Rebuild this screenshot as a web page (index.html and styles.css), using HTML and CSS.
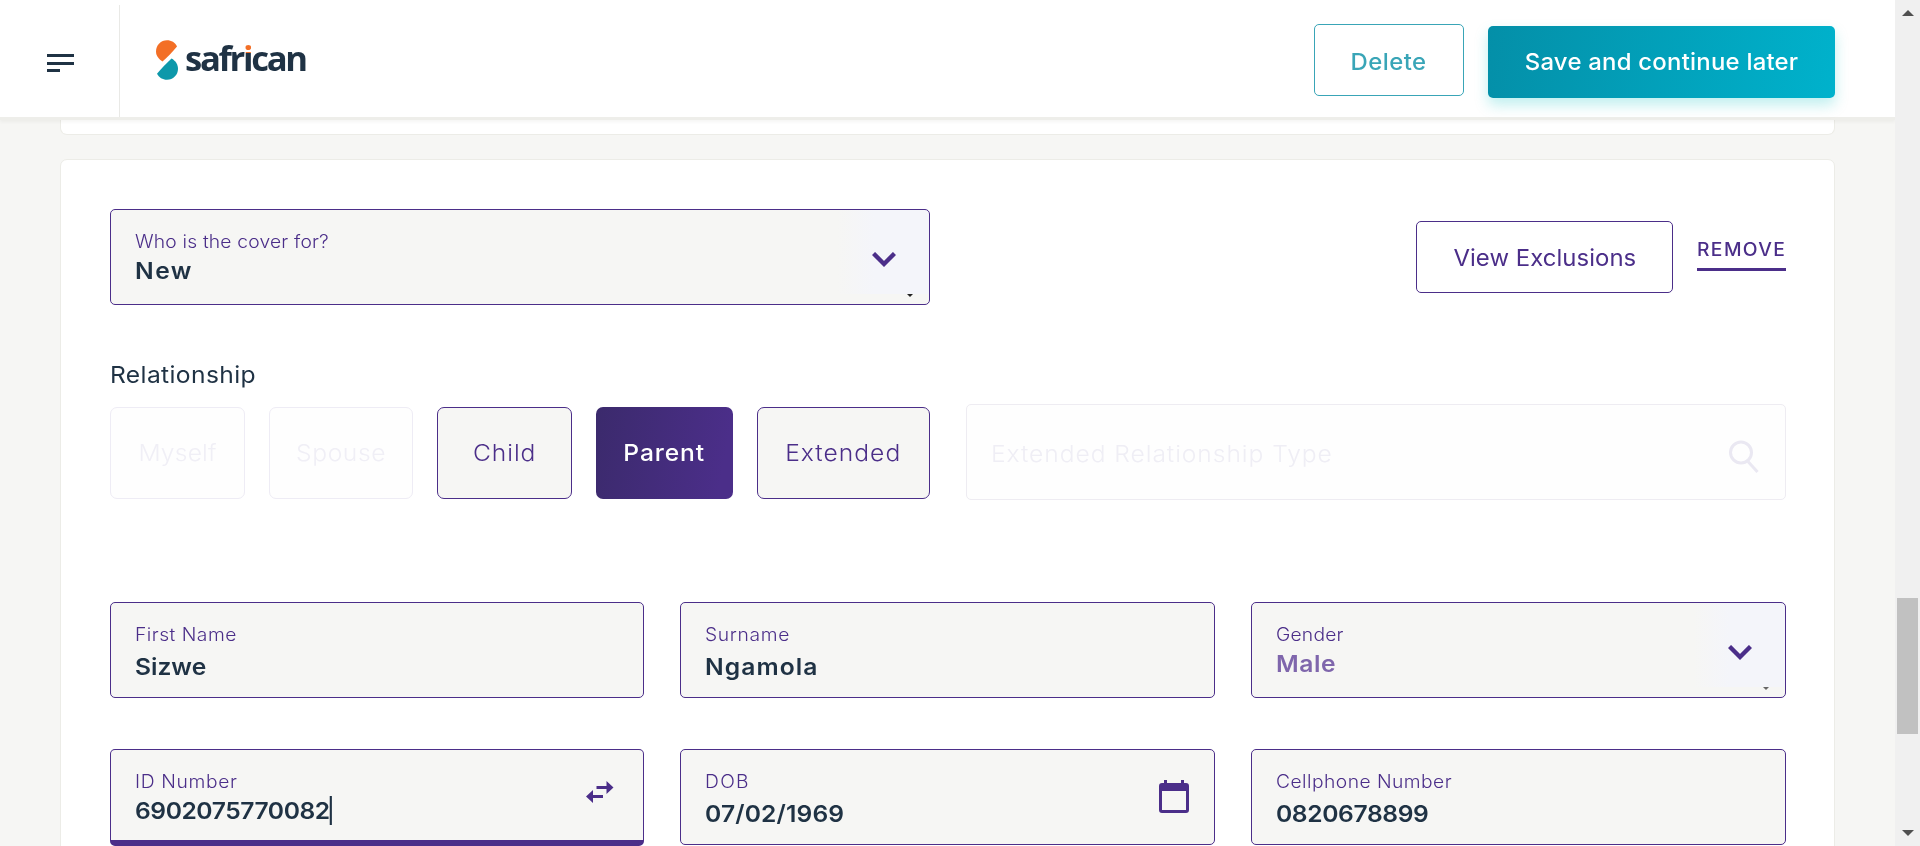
FILE: index.html
```html
<!DOCTYPE html>
<html lang="en">
<head>
<meta charset="utf-8">
<title>Safrican</title>
<link rel="stylesheet" href="styles.css">
</head>
<body>
<div class="page">
  <header class="header">
    <div class="menu">
      <svg width="27" height="18" viewBox="0 0 27 18" fill="#1f3244"><path d="M0 0h27v3H0zM0 8h27v3H0zM0 15h13v3H0z"/></svg>
    </div>
    <div class="brand">
      <svg class="mark" width="22" height="40" viewBox="0 0 22 40"><path fill="#f36f26" d="M6.500 21.500C2.500 19 0 15.500 0 11.500C0 5 5 .3 11 .3C15.500 .3 19 2.500 21 6.500C17 11.500 11.500 17 6.500 21.500Z"/><path fill="#0d98aa" d="M15.500 18.400C19.500 20.500 22 24.500 22 28.700C22 35 17 39.700 11 39.700C6.500 39.700 3 37.500 1 33.700C5 28.700 10.500 23 15.500 18.400Z"/></svg>
      <span class="wordmark">safr<span class="wordmark-i">i</span>can</span>
    </div>
    <div class="actions">
      <button class="btn btn-delete"><span>Delete</span></button>
      <button class="btn btn-save"><span>Save and continue later</span></button>
    </div>
  </header>
  <main class="main">
    <section class="card card-previous"></section>
    <section class="card card-form">
      <div class="top-row">
        <div class="field select">
          <div class="label l-cover">Who is the cover for?</div>
          <div class="value v-new">New</div>
          <svg class="chevron" width="24" height="16" viewBox="0 0 24 16"><path d="M1.500 1.500L12 12L22.500 1.500" fill="none" stroke="#4b2e89" stroke-width="4.400"/></svg>
          <i class="caret"></i>
        </div>
        <div class="row-actions">
          <button class="btn btn-view"><span>View Exclusions</span></button>
          <a class="remove"><span>REMOVE</span></a>
        </div>
      </div>
      <div class="section-label">Relationship</div>
      <div class="relation-row">
        <div class="options">
          <button class="option is-disabled o-myself"><span>Myself</span></button>
          <button class="option is-disabled o-spouse"><span>Spouse</span></button>
          <button class="option o-child"><span>Child</span></button>
          <button class="option is-active o-parent"><span>Parent</span></button>
          <button class="option o-extended"><span>Extended</span></button>
        </div>
        <div class="search">
          <span class="placeholder">Extended Relationship Type</span>
          <svg width="30" height="34" viewBox="0 0 30 34" fill="none" stroke="#eae8f2" stroke-width="3"><circle cx="12" cy="12.500" r="10.500"/><path d="M19 21.500L28.500 32"/></svg>
        </div>
      </div>
      <div class="fields">
        <div class="field text"><div class="label l-first">First Name</div><div class="value v-first">Sizwe</div></div>
        <div class="field text"><div class="label l-sur">Surname</div><div class="value v-sur">Ngamola</div></div>
        <div class="field select is-muted">
          <div class="label l-gender">Gender</div><div class="value v-gender">Male</div>
          <svg class="chevron" width="24" height="16" viewBox="0 0 24 16"><path d="M1.500 1.500L12 12L22.500 1.500" fill="none" stroke="#4b2e89" stroke-width="4.400"/></svg>
          <i class="caret"></i>
        </div>
        <div class="field is-focused">
          <div class="label l-id">ID Number</div><div class="value v-id">6902075770082<i class="cursor"></i></div>
          <svg class="swap" width="28" height="23" viewBox="0 0 28 23" fill="#4b2e89"><path d="M10.500 5H20.500V0L27.500 6.500L20.500 13V8H10.500zM17 14H7V9L0 15.500L7 22V17H17z"/></svg>
        </div>
        <div class="field text">
          <div class="label l-dob">DOB</div><div class="value v-dob">07/02/1969</div>
          <svg class="calendar" width="30" height="33" viewBox="0 0 30 33" fill="#4b2e89"><path fill-rule="evenodd" d="M5 0H8V3H22V0H25V3H27Q30 3 30 6V30Q30 33 27 33H3Q0 33 0 30V6Q0 3 3 3H5zM3 11V30H27V11z"/></svg>
        </div>
        <div class="field text"><div class="label l-cell">Cellphone Number</div><div class="value v-cell">0820678899</div></div>
      </div>
    </section>
  </main>
</div>
<div class="scrollbar">
  <svg class="arrow-up" width="12" height="6" viewBox="0 0 12 6"><path fill="#505050" d="M0 6L6 0L12 6z"/></svg>
  <div class="thumb"></div>
  <svg class="arrow-down" width="12" height="6" viewBox="0 0 12 6"><path fill="#505050" d="M0 0L6 6L12 0z"/></svg>
</div>
</body>
</html>
```
FILE: styles.css
```css
* { box-sizing: border-box; }
body { margin: 0; height: 846px; overflow: hidden; display: flex; background: #f6f6f4; font-family: Inter, "Liberation Sans", sans-serif; color: #1f3244; }
button { font-family: inherit; margin: 0; padding: 0; white-space: nowrap; }
svg { display: block; flex: none; }

.page { width: 1895px; flex: none; height: 846px; overflow: hidden; }

/* Header */
.header { position: relative; z-index: 1; height: 120px; display: flex; background: #fff; border-bottom: 3px solid #eeeeea; box-shadow: 0 2px 3px rgba(90, 90, 70, .06); }
.menu { width: 120px; margin-top: 5px; padding: 49px 0 0 47px; border-right: 1px solid #e9e9e6; }
.brand { display: flex; padding: 40px 0 0 36px; }
.wordmark { margin-left: 7px; margin-top: -6px; font: 700 34px/48px "Open Sans", "Noto Sans", sans-serif; letter-spacing: -2.3px; transform: scaleX(1.02); transform-origin: left; }
.wordmark-i { color: transparent; background: linear-gradient(#f36f26 18px, #1f3244 18px); -webkit-background-clip: text; background-clip: text; }
.actions { margin-left: auto; padding: 24px 60px 0 0; display: flex; gap: 24px; }
.btn { height: 72px; border-radius: 5px; font-size: 23px; background: #fff; border: 1px solid; }
.btn span { display: inline-block; transform: scaleX(1.04); }
.btn-delete { width: 150px; padding-top: 4px; color: #39a5b7; border-color: #39a5b7; font-weight: 450; letter-spacing: .43px; }
.btn-save { width: 347px; margin-top: 2px; border: 0; color: #fff; font-weight: 550; letter-spacing: .22px; background: linear-gradient(100deg, #048fa8, #00b2cc); box-shadow: 0 7px 14px rgba(0, 190, 190, .25); }

/* Cards */
.main { padding: 0 60px; }
.card { background: #fff; border: 1px solid #ecece7; border-radius: 7px; }
.card-previous { height: 15px; border-top: 0; border-radius: 0 0 7px 7px; }
.card-form { margin-top: 24px; height: 720px; padding: 49px 48px 0 49px; }

/* Fields */
.field { position: relative; height: 96px; padding: 20px 0 0 24px; background: #f6f6f4; border: 1px solid #4b2e89; border-radius: 5px; }
.label, .value { width: fit-content; white-space: nowrap; transform: scaleX(1.07); transform-origin: left; }
.label { font-size: 18px; font-weight: 300; line-height: 24px; color: #4b2e89; }
.value { margin-top: 3px; font-size: 23px; font-weight: 600; line-height: 28px; }
.text .value { margin-top: 6px; }
.select { background: linear-gradient(90deg, rgba(244, 245, 250, 0), #f4f5fa 40%) right top / 92px 84px no-repeat #f6f6f4; }
.is-muted .value { color: #7f66ac; }
.is-focused { height: 97px; border-bottom-width: 6px; }
.chevron { position: absolute; right: 33px; top: 42px; }
.caret { position: absolute; right: 16px; top: 84px; border: solid transparent; border-width: 3px 3px 0; border-top-color: #222; }
.is-muted .caret { border-top-color: #666; }
.swap { position: absolute; right: 29px; top: 31px; }
.calendar { position: absolute; right: 25px; top: 30px; }
.cursor { position: absolute; right: -2px; top: -1px; width: 2px; height: 29px; background: #1f3244; }

.top-row { display: flex; justify-content: space-between; }
.top-row .field { width: 820px; }
.row-actions { display: flex; gap: 24px; padding-top: 12px; }
.btn-view { width: 257px; padding-top: 1px; color: #4b2e89; border-color: #4b2e89; letter-spacing: .04px; }
.remove { height: 50px; width: 89px; padding-top: 17px; border-bottom: 3px solid #4b2e89; color: #4b2e89; font-size: 18px; line-height: 24px; font-weight: 500; letter-spacing: 1.3px; }
.remove span { display: inline-block; transform: scaleX(1.07); transform-origin: left; }

.section-label { width: fit-content; margin-top: 56px; font-size: 23px; line-height: 28px; letter-spacing: .35px; transform: scaleX(1.07); transform-origin: left; }
.relation-row { margin-top: 15px; display: flex; gap: 36px; }
.options { width: 820px; padding: 3px 0; height: 98px; display: flex; justify-content: space-between; }
.option { height: 92px; border: 1px solid #4b2e89; border-radius: 7px; background: #f6f6f4; color: #4b2e89; font-size: 23px; font-weight: 350; }
.option span { display: inline-block; transform: scaleX(1.07); }
.is-disabled { border-color: #eeecf5; background: #fefefe; color: #f0eff6; font-weight: 300; }
.is-active { border: 0; background: linear-gradient(100deg, #3b2a6c, #4b2e89 90%); color: #fff; font-weight: 450; }
.o-myself { width: 135px; letter-spacing: .18px; }
.o-spouse { width: 144px; letter-spacing: .57px; }
.o-child { width: 135px; letter-spacing: .88px; }
.o-parent { width: 137px; letter-spacing: .85px; }
.o-extended { width: 173px; letter-spacing: .95px; }
.search { width: 820px; height: 96px; padding: 0 26px 0 24px; display: flex; align-items: center; justify-content: space-between; border: 1px solid #eeecf2; border-radius: 5px; background: #fefefe; }
.placeholder { margin-top: 3px; font-size: 23px; font-weight: 300; letter-spacing: .88px; color: #efeef5; transform: scaleX(1.07); transform-origin: left; }
.search svg { margin-top: 10px; }

.fields { margin-top: 100px; display: grid; grid-template-columns: 534px 1fr 1fr; gap: 51px 36px; }

/* Tracking per text */
.l-cover { letter-spacing: .17px; }
.v-new { letter-spacing: 1.35px; }
.l-first { letter-spacing: .45px; }
.v-first { letter-spacing: 0; }
.l-sur { letter-spacing: .6px; }
.v-sur { letter-spacing: 1px; }
.l-gender { letter-spacing: .18px; }
.v-gender { letter-spacing: .5px; }
.l-id { letter-spacing: .6px; }
.v-id { letter-spacing: -.4px; }
.l-dob { letter-spacing: 1.2px; }
.v-dob { letter-spacing: .13px; }
.l-cell { letter-spacing: .42px; }
.v-cell { letter-spacing: -.34px; }

/* Scrollbar */
.scrollbar { flex: none; width: 25px; height: 846px; padding: 10px 0 10px; display: flex; flex-direction: column; align-items: center; background: #f0f0f0; }
.thumb { margin-top: 582px; width: 21px; height: 136px; background: #c1c1c1; }
.arrow-down { margin-top: auto; }
```
